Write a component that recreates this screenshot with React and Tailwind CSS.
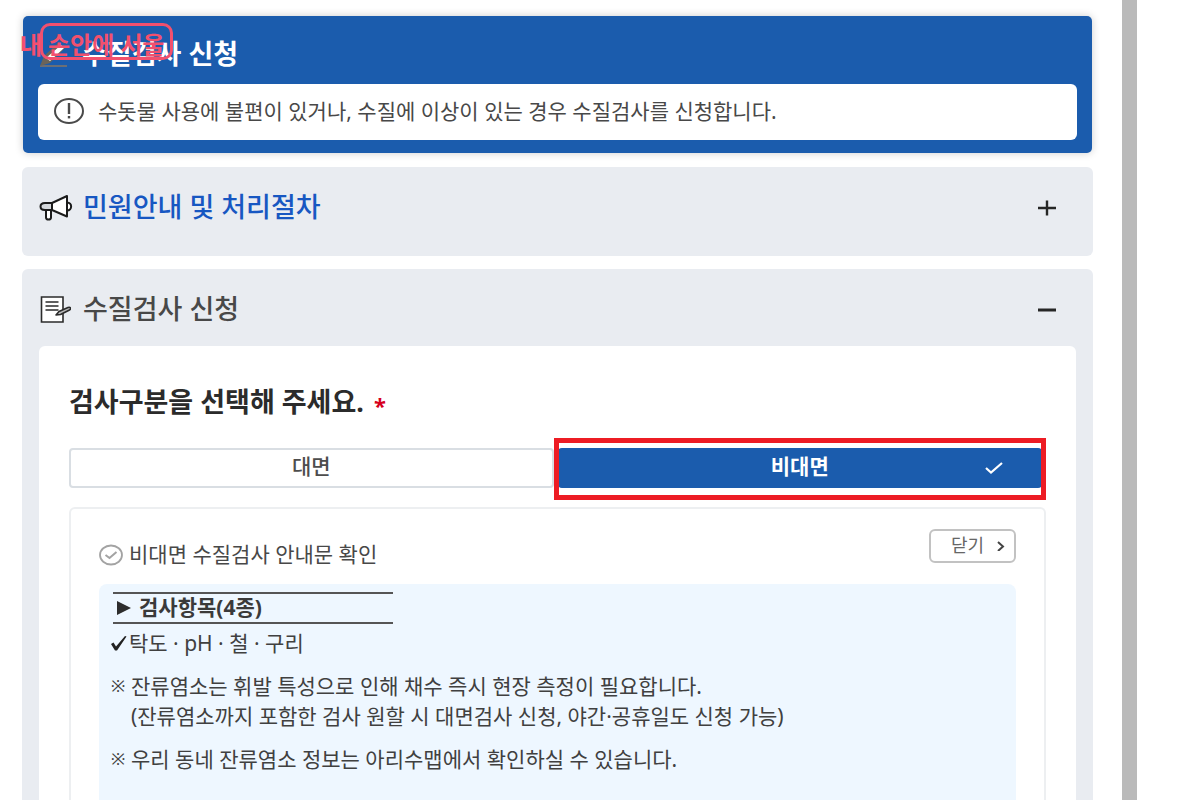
import { useState } from 'react'

const notes = [
    {
        lines: ['잔류염소는 휘발 특성으로 인해 채수 즉시 현장 측정이 필요합니다.', '(잔류염소까지 포함한 검사 원할 시 대면검사 신청, 야간·공휴일도 신청 가능)'],
    },
    {
        lines: ['우리 동네 잔류염소 정보는 아리수맵에서 확인하실 수 있습니다.'],
    },
]

function PencilIcon() {
    return (
        <svg className="w-8 h-8 shrink-0" viewBox="0 0 32 32" fill="none">
            <path d="M2 28h27" stroke="#6b6f76" strokeWidth="2" />
            <path d="M2 28l4-10L20 5l7 5L12 25z" fill="#6b6459" />
            <path d="M8 20L23 7l3 3L12 23z" fill="#fff" />
        </svg>
    )
}

function MegaphoneIcon() {
    return (
        <svg className="w-8 h-8 shrink-0 overflow-visible" viewBox="0 0 32 32" fill="none" stroke="#1b1b1b" strokeWidth="2" strokeLinejoin="round">
            <path d="M28 11.500c5.500 0 5.500 8 0 8" fill="#fff" />
            <path d="M7 18.500h5v8c0 2.800-5 2.800-5 0z" fill="#fff" />
            <path d="M6 12h7v7H6c-6 0-6-7 0-7z" fill="#d5d8dc" />
            <path d="M13 12L28 5v20.500L13 19z" fill="#fff" />
        </svg>
    )
}

function FormIcon() {
    return (
        <svg className="w-8 h-8 shrink-0" viewBox="0 0 32 32" fill="none" stroke="#2b2b2b" strokeWidth="1.600">
            <path d="M2.500 4h21.500v25h-21.500z" fill="#fff" />
            <path d="M6.500 9h13M6.500 13h13M6.500 17h13" />
            <path d="M17 22l3-3.500 9-4c2.500-1 3.500 1.500 1.500 2.500L21.500 21.500z" fill="#b7b7b7" strokeLinejoin="round" />
        </svg>
    )
}

function AlertIcon() {
    return (
        <svg className="w-[30px] h-[30px] shrink-0" viewBox="0 0 30 30" fill="none" stroke="#4a4a4a">
            <ellipse cx="15" cy="14" rx="14" ry="12" strokeWidth="2" />
            <path d="M15 6v11" strokeWidth="2.400" />
            <path d="M15 19v2.400" strokeWidth="2.400" />
        </svg>
    )
}

function CheckCircleIcon() {
    return (
        <svg className="w-6 h-6 shrink-0" viewBox="0 0 24 24" fill="none" stroke="#a3a3a3" strokeWidth="1.800">
            <ellipse cx="12" cy="13" rx="11" ry="9.500" />
            <path d="M6.500 13l4 3 7-6" strokeWidth="2" />
        </svg>
    )
}

function Logo() {
    return (
        <a href="#home" className="absolute left-5 top-[22px] flex items-center text-[24px] leading-[30px] font-bold text-[#f2506e]">
            <span className="w-5 pt-2">내</span>
            <span className="h-[37px] px-[5px] pt-2 flex items-center border-3 border-[#f2506e] rounded-[10px] whitespace-nowrap">손안에 서울</span>
        </a>
    )
}

function TypeButton({ label, selected, onClick }) {
    return (
        <button
            type="button"
            aria-pressed={selected}
            onClick={onClick}
            className={`relative flex-1 h-10 pb-0.5 flex items-center justify-center text-[21px] rounded-[4px] border-2 ${selected
                ? 'bg-[#1b5cad] border-[#1b5cad] text-white font-bold'
                : 'bg-white border-[#d9dee3] text-[#4d4d4d] font-medium'
            }`}
        >
            {label}
            {selected && (
                <svg className="absolute right-[36px] top-2 w-5 h-5" viewBox="0 0 20 20" fill="none" stroke="#fff" strokeWidth="2.200">
                    <path d="M2 10l5 4.500L18 5" />
                </svg>
            )}
        </button>
    )
}

export default function App() {
    const [type, setType] = useState('비대면')
    const [guideOpen, setGuideOpen] = useState(false)
    const [formOpen, setFormOpen] = useState(true)

    return (
        <div className="flex h-screen overflow-hidden bg-white text-[#484848] font-['Noto_Sans','Noto_Sans_CJK_KR',sans-serif]">
            <main className="relative flex-1 min-w-0 pl-[22px] pr-[29px] pt-4 flex flex-col gap-[13px]">
                {/* Page title */}
                <header className="shrink-0 mx-px mb-px px-[15px] pb-[13px] bg-[#1b5cad] rounded-[5px] shadow-[0_0_8px_rgba(0,0,0,0.2)]">
                    <div className="h-[68px] pt-2 flex items-center gap-3">
                        <PencilIcon />
                        <h1 className="text-[27px] leading-8 font-bold text-white">수질검사 신청</h1>
                    </div>
                    <div className="h-14 px-4 flex items-center gap-3.5 bg-white rounded-[6px]">
                        <AlertIcon />
                        <p className="text-[21px] pb-0.5 leading-8">수돗물 사용에 불편이 있거나, 수질에 이상이 있는 경우 수질검사를 신청합니다.</p>
                    </div>
                </header>

                {/* Guide */}
                <section className="shrink-0 h-[89px] bg-[#e9ecf1] rounded-[6px]">
                    <h2>
                        <button
                            type="button"
                            aria-expanded={guideOpen}
                            onClick={() => setGuideOpen(!guideOpen)}
                            className="w-full h-[80px] pl-[17px] pr-9 flex items-center gap-3 text-left"
                        >
                            <MegaphoneIcon />
                            <span className="flex-1 text-[27px] leading-8 font-medium text-[#1757c2]">민원안내 및 처리절차</span>
                            <svg className="w-5 h-5" viewBox="0 0 20 20" stroke="#262626" strokeWidth="2.400">
                                <path d="M1 11h18M10 3.500v15" />
                            </svg>
                        </button>
                    </h2>
                </section>

                {/* Application form */}
                <section className="flex-1 min-h-0 px-[17px] bg-[#e9ecf1] rounded-t-[6px] flex flex-col">
                    <h2>
                        <button
                            type="button"
                            aria-expanded={formOpen}
                            onClick={() => setFormOpen(!formOpen)}
                            className="w-full h-[77px] pt-0.5 pr-[19px] flex items-center gap-3 text-left"
                        >
                            <FormIcon />
                            <span className="flex-1 text-[27px] leading-8 font-medium">수질검사 신청</span>
                            <svg className="w-5 h-5" viewBox="0 0 20 20" stroke="#262626" strokeWidth="3">
                                <path d="M1 11h18" />
                            </svg>
                        </button>
                    </h2>

                    {formOpen && (
                        <div className="flex-1 min-h-0 px-[30px] pt-9 bg-white rounded-t-[6px] flex flex-col">
                            <h3 className="flex items-center gap-2.5 text-[27px] leading-10 font-bold text-[#2b2b2b]">
                                검사구분을 선택해 주세요.
                                <span className="pt-1.5 text-[22px] leading-8 text-[#d6001c]">*</span>
                            </h3>

                            <div className="relative mt-[26px] shrink-0 flex gap-1 pr-1">
                                <TypeButton label="대면" selected={type === '대면'} onClick={() => setType('대면')} />
                                <TypeButton label="비대면" selected={type === '비대면'} onClick={() => setType('비대면')} />
                                {/* Highlight around the second option */}
                                <div className="absolute -top-2.5 right-0 left-1/2 -ml-1 h-[62px] border-5 border-[#ed1c24] pointer-events-none" />
                            </div>

                            <div className="mt-[19px] flex-1 min-h-0 px-7 pt-5 border-2 border-b-0 border-[#edeff1] rounded-t-[6px] flex flex-col">
                                <div className="flex items-start justify-between">
                                    <div className="pt-[9px] flex items-center gap-1.5">
                                        <CheckCircleIcon />
                                        <h4 className="text-[21px] leading-8">비대면 수질검사 안내문 확인</h4>
                                    </div>
                                    <button type="button" className="w-[87px] h-[34px] pl-5 pr-2 pb-0.5 flex items-center justify-between border-2 border-[#c2c2c2] rounded-[6px] text-[18px] text-[#666]">
                                        닫기
                                        <svg className="w-3 h-3" viewBox="0 0 12 12" fill="none" stroke="#444" strokeWidth="2">
                                            <path d="M4 3l5 4.500L4 12" />
                                        </svg>
                                    </button>
                                </div>

                                <div className="mt-3.5 flex-1 min-h-0 px-3 pt-2 bg-[#eef7ff] rounded-t-[8px] text-[21px] leading-[30px] text-[#404040]">
                                    <h5 className="ml-0.5 w-[280px] h-8 flex items-center gap-2 border-y-2 border-[#555] font-bold text-[#3a3a3a]">
                                        <svg className="ml-1 w-3.5 h-3.5" viewBox="0 0 14 14" fill="#2d2d2d">
                                            <path d="M0 0l14 7-14 7z" />
                                        </svg>
                                        <span className="pb-0.5">검사항목(4종)</span>
                                    </h5>
                                    <p className="mt-1 flex items-center">
                                        <svg className="w-[17px] h-4 mr-px" viewBox="0 0 17 16" fill="#222">
                                            <path d="M0 9l2.500-1.500L5 11.500 14 1l1.500.5L6 15.500H4z" />
                                        </svg>
                                        탁도 · pH · 철 · 구리
                                    </p>
                                    {notes.map((note) => (
                                        <div key={note.lines[0]} className="mt-[13px] flex">
                                            <span className="w-5 text-[17px] shrink-0">※</span>
                                            <p>
                                                {note.lines.map((line) => (
                                                    <span key={line} className="block whitespace-nowrap">{line}</span>
                                                ))}
                                            </p>
                                        </div>
                                    ))}
                                </div>
                            </div>
                        </div>
                    )}
                </section>

                <Logo />
            </main>
            <aside className="w-[78px] shrink-0 border-l-[15px] border-[#bababa] bg-white" />
        </div>
    )
}
